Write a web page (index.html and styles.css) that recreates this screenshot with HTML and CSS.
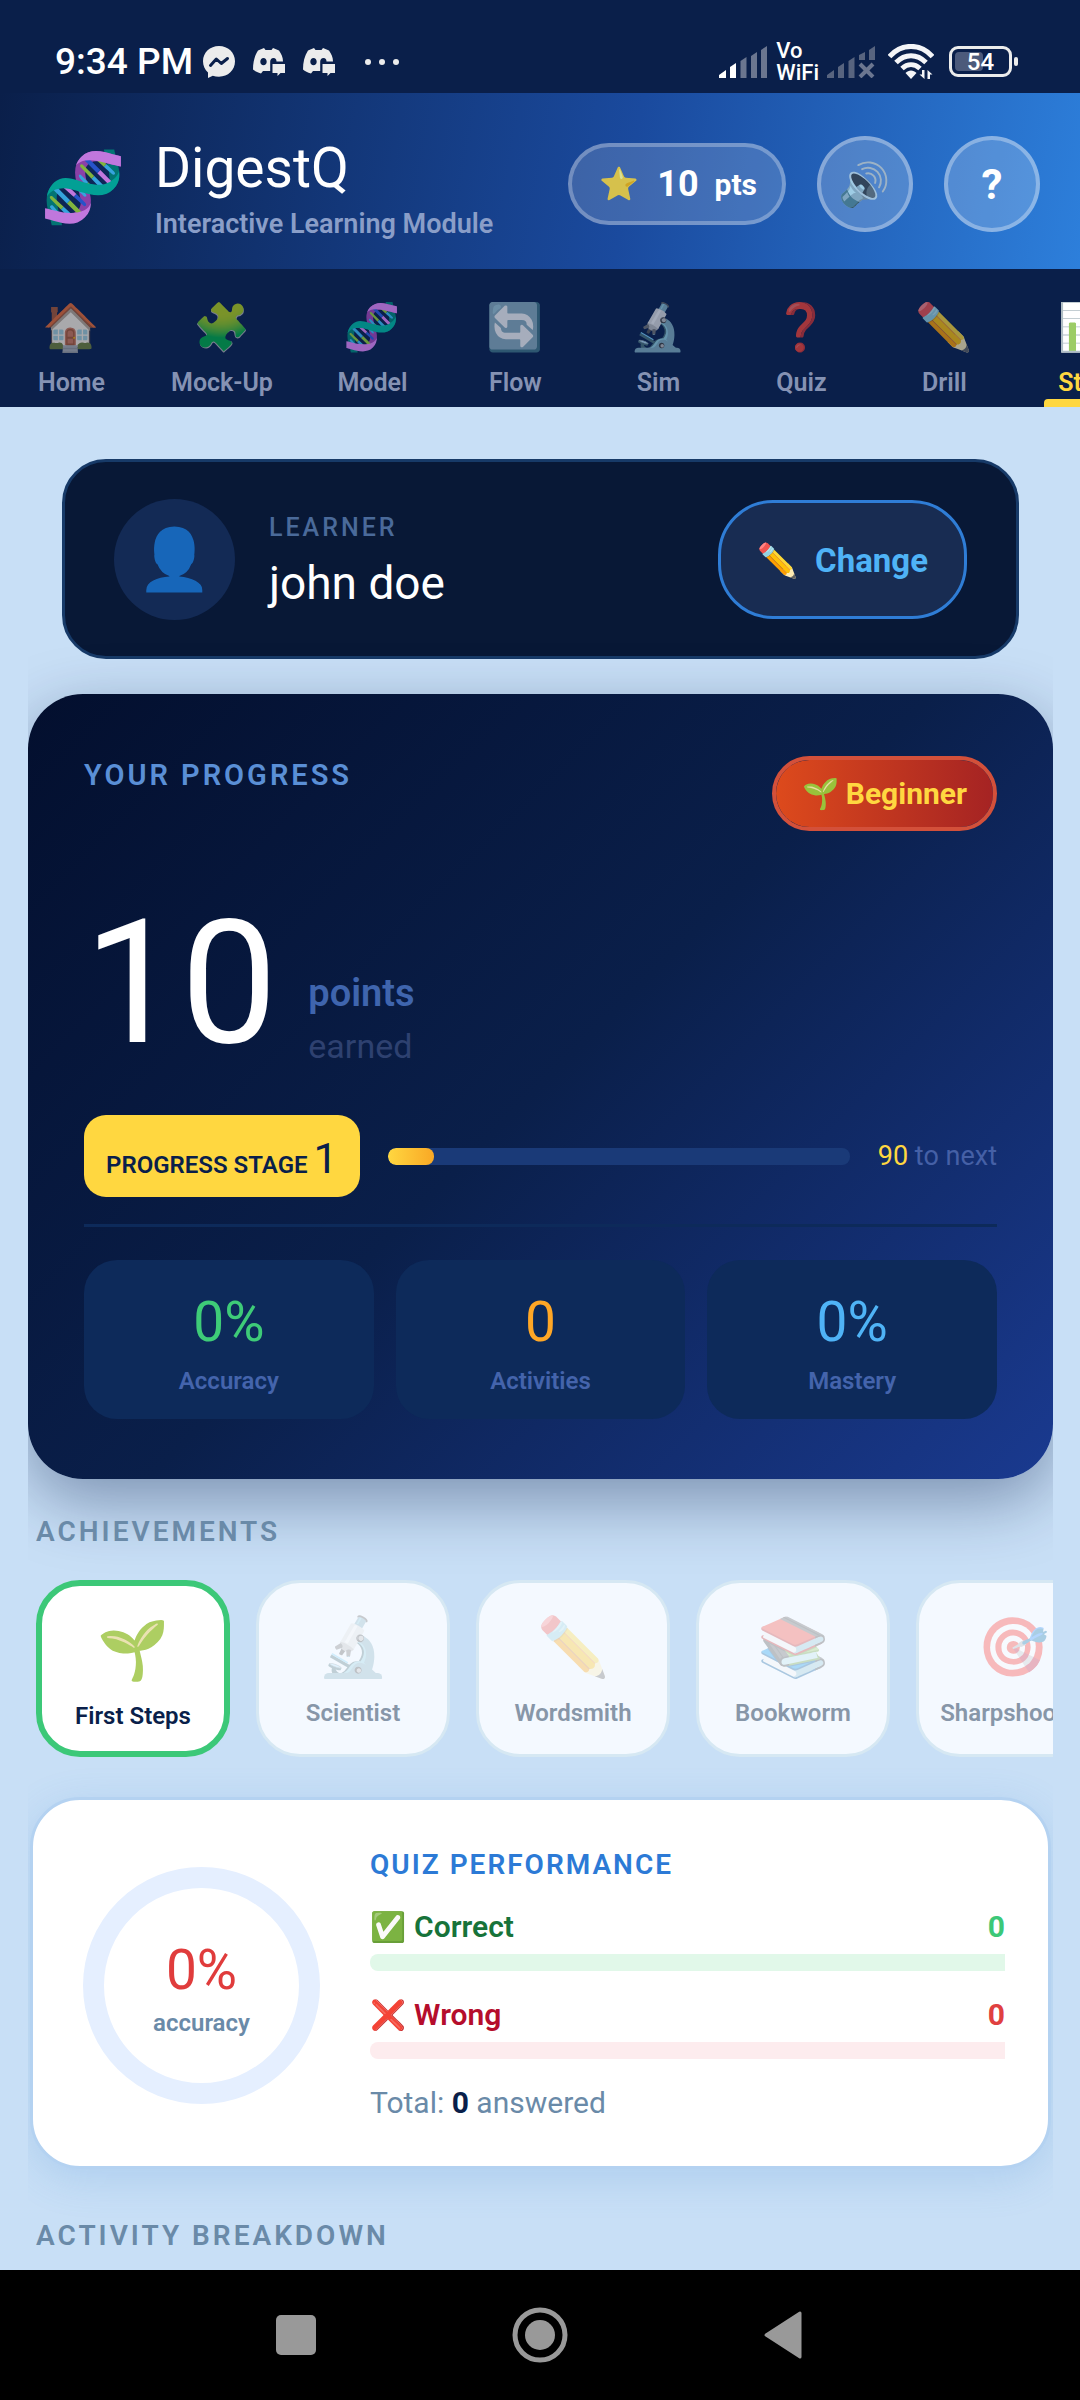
FILE: index.html
```html
<!DOCTYPE html>
<html lang="en">

<head>
	<meta charset="UTF-8">
	<meta name="viewport" content="width=device-width,initial-scale=1">
	<title>DigestQ</title>
	<link rel="stylesheet" href="styles.css">
</head>

<body>
	<div class="status-bar">
		<div class="status-left">
			<span class="clock">9:34 PM</span>
			<svg class="notif messenger" viewBox="0 0 32 32">
				<path fill="#ececec" d="M16 0C7 0 0 6.500 0 15.300c0 4.600 1.900 8.500 5 11.300V32l4.800-2.200c2 .6 4 .9 6.200.9 9 0 16-6.500 16-15.400S25 0 16 0z" />
				<path fill="none" stroke="#0a1f4a" stroke-width="3" stroke-linejoin="round" stroke-linecap="round" d="M7.500 19.500l5.800-6.500 5 4.500 6.200-5" />
			</svg>
			<svg class="notif" viewBox="0 0 32 28">
				<use href="#discord" />
			</svg>
			<svg class="notif" viewBox="0 0 32 28">
				<use href="#discord" />
			</svg>
			<span class="more-dots"><i></i><i></i><i></i></span>
		</div>
		<div class="status-right">
			<svg class="signal" viewBox="0 0 48 32">
				<g fill="#fff">
					<path d="M0 32v-3l7-5v8zM11 32V21l6-4v15z" />
				</g>
				<g fill="#6b7690">
					<path d="M21.500 32V15l6-4v21zM32 32V10l6-4v26zM42 32V4l6-4v32z" />
				</g>
			</svg>
			<span class="vowifi">Vo<br>WiFi</span>
			<svg class="signal" viewBox="0 0 48 32">
				<path fill="#58647f" d="M0 32v-3l7-5v8zM11 32V21l6-4v15zM21.500 32V15l6-4v21zM32 14V9l6-3v8zM42 14V4l6-4v14z" />
				<path stroke="#6b7690" stroke-width="4" d="M33 18l13 13M46 18L33 31" />
			</svg>
			<svg class="wifi" viewBox="0 0 46 35">
				<g fill="none" stroke="#f4f5f8" stroke-width="5">
					<path d="M1.500 12.500c12-13.500 31-13.500 43 0" />
					<path d="M8 18.500c9-9 21-9 30 0" />
					<path d="M14 24.500c5.500-5 12.500-5 18 0" />
				</g>
				<path fill="#f4f5f8" d="M17.500 29c3-3.500 8-3.500 11 0L23 35z" />
				<path fill="#f4f5f8" d="M34 26h2.500v9l-5-4.500H34zM39.500 35v-9l5 4.500H42V35z" />
			</svg>
			<span class="battery"><i class="battery-level"></i><b>54</b></span>
		</div>
	</div>

	<header class="app-header">
		<span class="emoji logo">🧬</span>
		<div class="brand">
			<h1>DigestQ</h1>
			<p>Interactive Learning Module</p>
		</div>
		<div class="points-pill"><span class="emoji">⭐</span><b>10</b><span class="unit">pts</span></div>
		<button class="round-btn" aria-label="Sound"><span class="emoji">🔊</span></button>
		<button class="round-btn" aria-label="Help">?</button>
	</header>

	<nav class="tabs">
		<a href="#home"><span class="emoji">🏠</span>Home</a>
		<a href="#mockup"><span class="emoji">🧩</span>Mock-Up</a>
		<a href="#model"><span class="emoji">🧬</span>Model</a>
		<a href="#flow"><span class="emoji">🔄</span>Flow</a>
		<a href="#sim"><span class="emoji">🔬</span>Sim</a>
		<a href="#quiz"><span class="emoji">❓</span>Quiz</a>
		<a href="#drill"><span class="emoji">✏️</span>Drill</a>
		<a href="#stats" class="active"><span class="emoji">📊</span>Stats</a>
	</nav>

	<main class="content">
		<section class="learner">
			<div class="avatar"><span class="emoji">👤</span></div>
			<div class="learner-info">
				<span class="learner-label">LEARNER</span>
				<span class="learner-name">john doe</span>
			</div>
			<button class="change-btn"><span class="emoji">✏️</span>Change</button>
		</section>

		<section class="progress-card">
			<div class="progress-top">
				<h2>YOUR PROGRESS</h2>
				<span class="rank"><span class="emoji">🌱</span>Beginner</span>
			</div>
			<div class="score">
				<span class="score-value">10</span>
				<div class="score-text">
					<span class="score-unit">points</span>
					<span class="score-note">earned</span>
				</div>
			</div>
			<div class="stage">
				<span class="stage-chip">PROGRESS STAGE <b>1</b></span>
				<div class="stage-bar">
					<div class="stage-fill" style="width: 10%"></div>
				</div>
				<span class="stage-next"><b>90</b> to next</span>
			</div>
			<div class="stats">
				<div class="stat"><span class="stat-value green">0%</span><span class="stat-label">Accuracy</span></div>
				<div class="stat"><span class="stat-value orange">0</span><span class="stat-label">Activities</span></div>
				<div class="stat"><span class="stat-value blue">0%</span><span class="stat-label">Mastery</span></div>
			</div>
		</section>

		<h2 class="section-title">ACHIEVEMENTS</h2>
		<div class="badges">
			<div class="badge earned"><span class="emoji">🌱</span>First Steps</div>
			<div class="badge"><span class="emoji">🔬</span>Scientist</div>
			<div class="badge"><span class="emoji">✏️</span>Wordsmith</div>
			<div class="badge"><span class="emoji">📚</span>Bookworm</div>
			<div class="badge"><span class="emoji">🎯</span>Sharpshooter</div>
		</div>

		<section class="quiz-card">
			<div class="ring">
				<span class="ring-value">0%</span>
				<span class="ring-label">accuracy</span>
			</div>
			<div class="quiz-info">
				<h2>QUIZ PERFORMANCE</h2>
				<div class="quiz-row correct">
					<span class="emoji">✅</span><span>Correct</span><b>0</b>
				</div>
				<div class="quiz-bar correct-bar"></div>
				<div class="quiz-row wrong">
					<span class="emoji">❌</span><span>Wrong</span><b>0</b>
				</div>
				<div class="quiz-bar wrong-bar"></div>
				<p class="quiz-total">Total: <b>0</b> answered</p>
			</div>
		</section>

		<h2 class="section-title">ACTIVITY BREAKDOWN</h2>
	</main>

	<div class="system-nav">
		<button aria-label="Recent apps"><svg viewBox="0 0 56 56"><rect x="8" y="8" width="40" height="40" rx="5" fill="#999" /></svg></button>
		<button aria-label="Home"><svg viewBox="0 0 56 56"><circle cx="28" cy="28" r="25" fill="none" stroke="#999" stroke-width="5" /><circle cx="28" cy="28" r="15" fill="#999" /></svg></button>
		<button aria-label="Back"><svg viewBox="0 0 56 56"><path d="M10 28L44 6v44z" fill="#999" stroke="#999" stroke-width="3" stroke-linejoin="round" /></svg></button>
	</div>

	<svg class="defs" aria-hidden="true">
		<symbol id="discord" viewBox="0 0 32 28">
			<path fill="#ececec" d="M5 2.500L11 0l1.500 2h6L20 0l6 2.500c2.500 3.500 4 7 4 11h-6.500c0-2-1-3.500-3-3.500s-3.300 1.600-3.300 3.700V23H10l-2 2.500C4.500 24.600 2 23 0 21.500 0 14 1.500 8 5 2.500zM10.500 10c-1.800 0-3.200 1.600-3.200 3.700s1.400 3.600 3.200 3.600 3.200-1.600 3.200-3.600-1.400-3.700-3.200-3.700z" />
			<path fill="#ececec" d="M19.500 16H32v9h-4.500L24.500 28v-3h-5z" />
		</symbol>
	</svg>
</body>

</html>
```
FILE: styles.css
```css
:root {
	--navy: #0a1f4a;
	--sky: #c8dff6;
	--yellow: #ffd740;
	--muted: #6a8aa8;
}

* {
	box-sizing: border-box;
}

body {
	margin: 0;
	height: 100vh;
	display: flex;
	flex-direction: column;
	overflow: hidden;
	background: var(--sky);
	font-family: Roboto, sans-serif;
	color: #fff;
}

h1, h2, p {
	margin: 0;
	font-weight: 400;
}

button {
	font-family: inherit;
	color: inherit;
	padding: 0;
	border: 0;
	cursor: pointer;
}

a {
	color: inherit;
	text-decoration: none;
}

.emoji {
	font-family: "Noto Color Emoji", sans-serif;
	font-weight: 400;
	letter-spacing: 0;
}

.defs {
	position: absolute;
	width: 0;
	height: 0;
}

/* phone status bar */
.status-bar {
	flex: none;
	display: flex;
	justify-content: space-between;
	align-items: center;
	height: 93px;
	padding: 30px 60px 0 55px;
	background: var(--navy);
}

.status-left,
.status-right {
	display: flex;
	align-items: center;
}

.clock {
	font-size: 37px;
	font-weight: 500;
	line-height: 44px;
	margin-right: 10px;
}

.notif {
	width: 32px;
	height: 28px;
	margin-right: 18px;
}

.notif.messenger {
	height: 32px;
}

.more-dots {
	display: flex;
	gap: 8px;
	margin-left: 12px;
}

.more-dots i {
	width: 6px;
	height: 6px;
	border-radius: 50%;
	background: #ececec;
}

.signal {
	width: 48px;
	height: 32px;
}

.vowifi {
	font-size: 22px;
	font-weight: 500;
	line-height: 22px;
	margin: 0 8px 0 9px;
}

.wifi {
	width: 46px;
	height: 35px;
	margin: 0 15px 0 13px;
}

.battery {
	position: relative;
	display: flex;
	align-items: center;
	justify-content: center;
	width: 63px;
	height: 31px;
	margin-right: 8px;
	border: 3px solid #ececec;
	border-radius: 9px;
	font-size: 24px;
}

.battery::after {
	content: '';
	position: absolute;
	right: -9px;
	top: 8px;
	width: 4px;
	height: 9px;
	border-radius: 2px;
	background: #ececec;
}

.battery-level {
	position: absolute;
	left: 3px;
	top: 3px;
	bottom: 3px;
	width: 28px;
	border-radius: 4px;
	background: #4c5a7b;
}

.battery b {
	position: relative;
	font-weight: 500;
}

/* app header */
.app-header {
	flex: none;
	display: flex;
	align-items: center;
	height: 176px;
	padding: 6px 40px 0;
	background: linear-gradient(100deg, #0a1f4a 0%, #1a4a9e 58%, #2d7fdb 100%);
}

.logo {
	width: 88px;
	padding-top: 8px;
	font-size: 69px;
	line-height: 88px;
	opacity: .8;
}

.brand {
	flex: 1;
	margin-left: 27px;
	padding-top: 8px;
}

.brand h1 {
	font-size: 55px;
	line-height: 64px;
}

.brand p {
	font-size: 27px;
	font-weight: 600;
	line-height: 32px;
	margin-top: 8px;
	color: #8a9ec8;
}

.points-pill {
	display: flex;
	align-items: center;
	height: 82px;
	padding: 0 25px 0 27px;
	border: 4px solid rgba(255, 255, 255, .28);
	border-radius: 41px;
	background: rgba(255, 255, 255, .16);
	font-size: 36px;
}

.points-pill .emoji,
.round-btn .emoji {
	opacity: .8;
}

.points-pill .emoji {
	font-size: 32px;
	margin-right: 18px;
}

.points-pill .unit {
	font-size: 30px;
	font-weight: 700;
	margin-left: 16px;
}

.round-btn {
	width: 96px;
	height: 96px;
	margin-left: 31px;
	border: 4px solid rgba(255, 255, 255, .32);
	border-radius: 50%;
	background: rgba(255, 255, 255, .2);
	font-size: 42px;
	font-weight: 700;
}

/* tabs */
.tabs {
	flex: none;
	display: flex;
	overflow: hidden;
	height: 138px;
	background: var(--navy);
}

.tabs a {
	position: relative;
	flex: none;
	display: flex;
	flex-direction: column;
	align-items: center;
	min-width: 143px;
	padding: 28px 28px 0;
	font-size: 25px;
	font-weight: 600;
	line-height: 30px;
	color: #8592b3;
}

.tabs .emoji {
	font-size: 46px;
	line-height: 60px;
	margin-bottom: 11px;
	opacity: .65;
}

.tabs .active {
	color: var(--yellow);
}

.tabs .active .emoji {
	opacity: 1;
}

.tabs .active::after {
	content: '';
	position: absolute;
	left: 28px;
	right: 28px;
	bottom: 0;
	height: 8px;
	border-radius: 4px 4px 0 0;
	background: var(--yellow);
}

/* content */
.content {
	flex: 1;
	min-height: 0;
	overflow: hidden;
	margin: 0 27px 0 28px;
	padding-top: 52px;
}

.learner {
	display: flex;
	align-items: center;
	margin: 0 34px 35px;
	padding: 37px 49px 36px;
	border: 3px solid #173a68;
	border-radius: 44px;
	background: #081836;
}

.avatar {
	display: flex;
	align-items: center;
	justify-content: center;
	width: 121px;
	height: 121px;
	border-radius: 50%;
	background: #132a55;
	font-size: 60px;
}

.avatar .emoji {
	opacity: .8;
}

.learner-info {
	flex: 1;
	display: flex;
	flex-direction: column;
	margin-left: 34px;
	padding-top: 4px;
}

.learner-label {
	font-size: 25px;
	font-weight: 500;
	line-height: 30px;
	letter-spacing: 3px;
	color: #4a6a9a;
}

.learner-name {
	font-size: 46px;
	line-height: 56px;
	margin-top: 12px;
}

.change-btn {
	display: flex;
	align-items: center;
	height: 119px;
	padding: 2px 36px 0;
	border: 3px solid #2f7dd6;
	border-radius: 55px;
	background: #182c52;
	font-size: 33px;
	font-weight: 700;
	color: #4fb3f6;
}

.change-btn .emoji {
	font-size: 33px;
	margin-right: 17px;
}

.progress-card {
	padding: 62px 56px 60px;
	border-radius: 55px;
	background: linear-gradient(135deg, #030f2e 0%, #0a1f4a 50%, #1a3a90 100%);
	box-shadow: 0 22px 66px rgba(10, 31, 74, .4);
}

.progress-top {
	display: flex;
	align-items: flex-start;
	justify-content: space-between;
}

.progress-top h2 {
	font-size: 29px;
	font-weight: 600;
	line-height: 38px;
	letter-spacing: 3px;
	color: #5a8fd6;
}

.rank {
	display: flex;
	align-items: center;
	height: 75px;
	padding: 0 26px;
	border: 4px solid #d3503a;
	border-radius: 38px;
	background: linear-gradient(90deg, #dd4a1c, #a52323) padding-box;
	font-size: 30px;
	font-weight: 700;
	color: var(--yellow);
}

.rank .emoji {
	font-size: 30px;
	margin-right: 6px;
}

.score {
	display: flex;
	align-items: flex-end;
	gap: 31px;
	margin-top: 66px;
}

.score-value {
	font-size: 172px;
	line-height: 172px;
}

.score-text {
	display: flex;
	flex-direction: column;
	gap: 8px;
	line-height: 45px;
}

.score-unit {
	font-size: 38px;
	font-weight: 600;
	color: #3f65ae;
}

.score-note {
	font-size: 34px;
	color: #2e4170;
}

.stage {
	display: flex;
	align-items: center;
	gap: 28px;
	margin-top: 46px;
	padding-bottom: 27px;
	border-bottom: 3px solid #0d2a5a;
}

.stage-chip {
	height: 82px;
	padding: 18px 22px 0;
	border-radius: 22px;
	background: var(--yellow);
	font-size: 24px;
	font-weight: 600;
	line-height: 50px;
	white-space: nowrap;
	color: var(--navy);
}

.stage-chip b {
	font-size: 43px;
	font-weight: 400;
}

.stage-bar {
	flex: 1;
	height: 17px;
	border-radius: 8px;
	overflow: hidden;
	background: #1a3a78;
}

.stage-fill {
	height: 100%;
	border-radius: 8px;
	background: linear-gradient(90deg, #ffd740, #f9a825);
}

.stage-next {
	font-size: 27px;
	white-space: nowrap;
	color: #4560a6;
}

.stage-next b {
	font-weight: 400;
	color: var(--yellow);
}

.stats {
	display: grid;
	grid-template-columns: repeat(3, 1fr);
	gap: 22px;
	margin-top: 33px;
}

.stat {
	display: flex;
	flex-direction: column;
	align-items: center;
	height: 159px;
	padding-top: 30px;
	border-radius: 33px;
	background: #0d2a5a;
}

.stat-value {
	font-size: 55px;
	line-height: 64px;
}

.stat-label {
	font-size: 24px;
	font-weight: 600;
	line-height: 30px;
	margin-top: 12px;
	color: #4464ac;
}

.green {
	color: #3ecb78;
}

.orange {
	color: #ffa726;
}

.blue {
	color: #4fb3f6;
}

.section-title {
	padding: 36px 8px 0;
	font-size: 28px;
	font-weight: 600;
	line-height: 34px;
	letter-spacing: 3px;
	color: var(--muted);
}

/* achievements */
.badges {
	display: flex;
	gap: 26px;
	margin: 31px 0 40px 8px;
}

.badge {
	flex: none;
	display: flex;
	flex-direction: column;
	align-items: center;
	width: 194px;
	height: 177px;
	padding-top: 27px;
	border: 3px solid #d6e8f3;
	border-radius: 44px;
	background: #f4f9ff;
	font-size: 24px;
	font-weight: 600;
	line-height: 30px;
	color: #8796a8;
}

.badge .emoji {
	font-size: 58px;
	line-height: 74px;
	margin-bottom: 14px;
	opacity: .3;
}

.badge.earned {
	border: 6px solid #3cc878;
	background: #fff;
	color: var(--navy);
}

.badge.earned .emoji {
	opacity: .8;
}

/* quiz performance */
.quiz-card {
	display: flex;
	align-items: center;
	gap: 50px;
	margin: 0 2px 14px;
	padding: 48px 43px 44px 50px;
	border: 3px solid #b4d2f1;
	border-radius: 50px;
	background: #fff;
	box-shadow: 0 10px 40px rgba(70, 140, 210, .2);
}

.ring {
	flex: none;
	display: flex;
	flex-direction: column;
	align-items: center;
	justify-content: center;
	width: 237px;
	height: 237px;
	padding-top: 6px;
	border: 21px solid #e5efff;
	border-radius: 50%;
}

.ring-value {
	font-size: 55px;
	line-height: 64px;
	color: #e03c3c;
}

.ring-label {
	font-size: 24px;
	font-weight: 600;
	line-height: 30px;
	margin-top: 6px;
	color: var(--muted);
}

.quiz-info {
	flex: 1;
}

.quiz-info h2 {
	font-size: 28px;
	font-weight: 600;
	line-height: 34px;
	letter-spacing: 2px;
	margin-bottom: 26px;
	color: #2c7ad6;
}

.quiz-row {
	display: flex;
	align-items: center;
	gap: 8px;
	font-size: 30px;
	font-weight: 600;
	line-height: 38px;
}

.quiz-row .emoji {
	font-size: 29px;
}

.quiz-row b {
	margin-left: auto;
	font-weight: 700;
}

.correct {
	color: #17733a;
}

.correct b {
	color: #3cc878;
}

.wrong {
	color: #b50d2c;
}

.wrong b {
	color: #e04040;
}

.quiz-bar {
	height: 17px;
	margin: 8px 0 25px;
	border-radius: 8px 0 0 8px;
}

.correct-bar {
	background: #e1f8e9;
}

.wrong-bar {
	background: #fdecee;
}

.quiz-total {
	font-size: 30px;
	line-height: 38px;
	color: var(--muted);
}

.quiz-total b {
	font-weight: 700;
	color: var(--navy);
}

/* phone navigation */
.system-nav {
	flex: none;
	display: flex;
	justify-content: center;
	align-items: center;
	gap: 188px;
	height: 130px;
	background: #000;
}

.system-nav button {
	height: 56px;
	background: none;
}

.system-nav svg {
	width: 56px;
	height: 56px;
}
```
